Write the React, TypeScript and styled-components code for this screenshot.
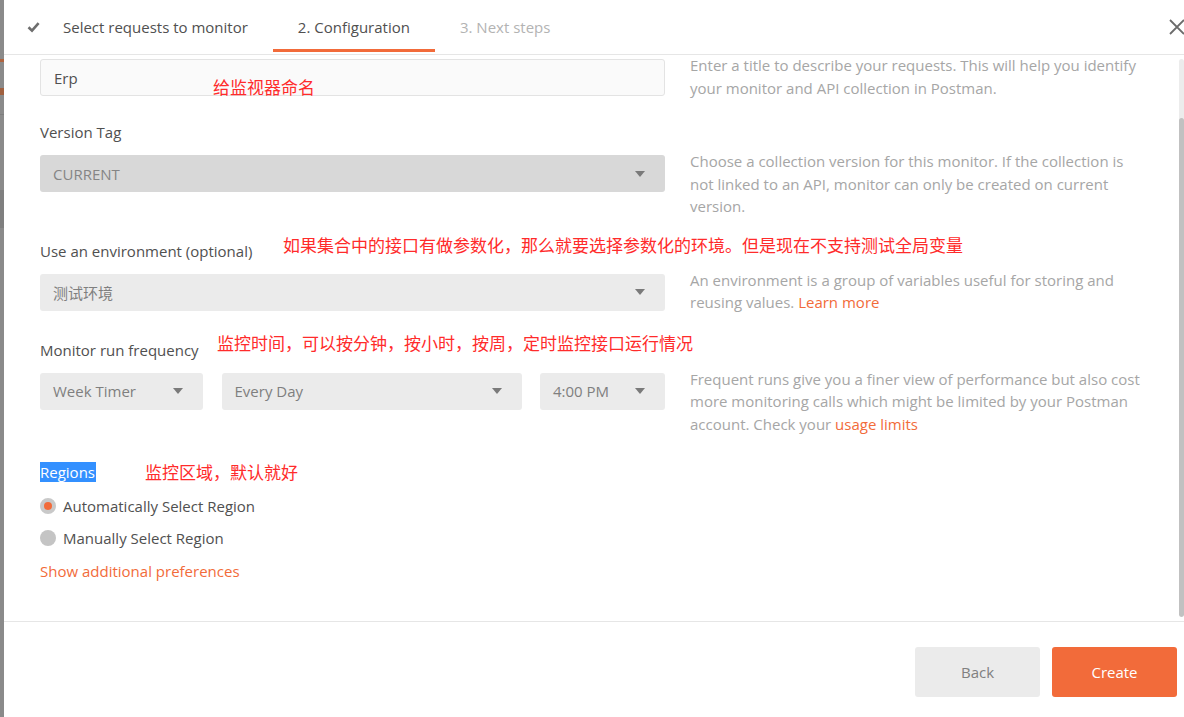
import React from 'react'
import styled, { createGlobalStyle } from 'styled-components'

const GlobalStyle = createGlobalStyle`
    html, body {
        margin: 0;
        padding: 0;
        background: #fff;
    }
    body {
        font-family: "Open Sans", "Noto Sans CJK SC", sans-serif;
        font-size: 15px;
        color: #505050;
    }
`

const ORANGE = '#f26b3a'

function CheckIcon() {
    return (
        <svg width="13" height="12" viewBox="0 0 13 12">
            <path d="M1.5 6.2 L5 9.6 L11.6 2.2" fill="none" stroke="#6e6e6e" strokeWidth="2.6" />
        </svg>
    )
}

function CloseIcon() {
    return (
        <svg width="16" height="16" viewBox="0 0 16 16">
            <path d="M1 1 L15 15 M15 1 L1 15" stroke="#6b6b6b" strokeWidth="1.8" />
        </svg>
    )
}

function App() {
    return (
        <Screen>
            <GlobalStyle />
            <Backdrop />
            <Modal>
                <Header>
                    <Tab state="done" first>
                        <CheckIcon />
                        <span>Select requests to monitor</span>
                    </Tab>
                    <Tab state="active">2. Configuration</Tab>
                    <Tab state="todo">3. Next steps</Tab>
                    <Close><CloseIcon /></Close>
                </Header>
                <Body>
                    <Content>
                        <Section after={23}>
                            <Control>
                                <TextInput>Erp</TextInput>
                            </Control>
                            <Help>
                                Enter a title to describe your requests. This will help you identify
                                your monitor and API collection in Postman.
                            </Help>
                            <Note left={173} top={18}>给监视器命名</Note>
                        </Section>

                        <Section after={23}>
                            <Label>Version Tag</Label>
                            <Control>
                                <Select disabled>
                                    <span>CURRENT</span>
                                    <Caret />
                                </Select>
                            </Control>
                            <Help>
                                Choose a collection version for this monitor. If the collection is
                                not linked to an API, monitor can only be created on current
                                version.
                            </Help>
                        </Section>

                        <Section after={26}>
                            <Label>Use an environment (optional)</Label>
                            <Control>
                                <Select>
                                    <span>测试环境</span>
                                    <Caret />
                                </Select>
                            </Control>
                            <Help>
                                An environment is a group of variables useful for storing and
                                reusing values. <Link>Learn more</Link>
                            </Help>
                            <Note left={243} top={-6}>如果集合中的接口有做参数化，那么就要选择参数化的环境。但是现在不支持测试全局变量</Note>
                        </Section>

                        <Section after={27}>
                            <Label>Monitor run frequency</Label>
                            <FrequencyRow>
                                <Select width={163}>
                                    <span>Week Timer</span>
                                    <Caret />
                                </Select>
                                <Select width={300}>
                                    <span>Every Day</span>
                                    <Caret />
                                </Select>
                                <Select width={125}>
                                    <span>4:00 PM</span>
                                    <Caret />
                                </Select>
                            </FrequencyRow>
                            <Help>
                                Frequent runs give you a finer view of performance but also cost
                                more monitoring calls which might be limited by your Postman
                                account. Check your <Link>usage limits</Link>
                            </Help>
                            <Note left={177} top={-7}>监控时间，可以按分钟，按小时，按周，定时监控接口运行情况</Note>
                        </Section>

                        <Regions>
                            <RegionsLabel><Selected>Regions</Selected></RegionsLabel>
                            <Radio>
                                <RadioDot checked />
                                <span>Automatically Select Region</span>
                            </Radio>
                            <Radio>
                                <RadioDot />
                                <span>Manually Select Region</span>
                            </Radio>
                            <MoreLink>Show additional preferences</MoreLink>
                            <Note left={105} top={0}>监控区域，默认就好</Note>
                        </Regions>
                    </Content>
                    <Scrollbar>
                        <ScrollGap />
                        <ScrollThumb />
                    </Scrollbar>
                </Body>
                <Footer>
                    <Button>Back</Button>
                    <Button primary>Create</Button>
                </Footer>
            </Modal>
        </Screen>
    )
}

const Screen = styled.div`
    width: 1184px;
    height: 717px;
    display: flex;
    overflow: hidden;
`

const Backdrop = styled.div`
    width: 4px;
    flex-shrink: 0;
    background: linear-gradient(
        to bottom,
        #8a8a8a 0, #8a8a8a 59px,
        #b0643f 59px, #b0643f 62px,
        #8a8a8a 62px, #8a8a8a 88px,
        #a0603f 88px, #a0603f 95px,
        #8a8a8a 95px, #8a8a8a 114px,
        #7e7e7e 114px, #7e7e7e 115px,
        #8a8a8a 115px, #8a8a8a 190px,
        #7f7f7f 190px, #7f7f7f 228px,
        #8a8a8a 228px
    );
`

const Modal = styled.div`
    flex: 1;
    display: flex;
    flex-direction: column;
    background: #fff;
    min-width: 0;
`

const Header = styled.div`
    height: 54px;
    flex-shrink: 0;
    display: flex;
    align-items: flex-start;
    border-bottom: 1px solid #e6e6e6;
`

const Tab = styled.div<{ state: 'done' | 'active' | 'todo'; first?: boolean }>`
    height: 52px;
    box-sizing: border-box;
    padding: 5px 25px 0 ${p => (p.first ? 23 : 25)}px;
    display: flex;
    align-items: center;
    gap: 23px;
    font-size: 15px;
    color: ${p => (p.state === 'todo' ? '#b3b3b3' : '#505050')};
    border-bottom: 3px solid ${p => (p.state === 'active' ? ORANGE : 'transparent')};
    white-space: nowrap;
`

const Close = styled.div`
    margin-left: auto;
    margin-top: 19px;
    margin-right: -1px;
    width: 16px;
    height: 16px;
    display: flex;
`

const Body = styled.div`
    flex: 1;
    display: flex;
    min-height: 0;
`

const Content = styled.div`
    flex: 1;
    padding: 4px 0 0 36px;
    overflow: hidden;
`

const Section = styled.div<{ after: number }>`
    position: relative;
    display: grid;
    grid-template-columns: 625px 456px;
    column-gap: 25px;
    margin-bottom: ${p => p.after}px;
`

const Label = styled.div`
    grid-column: 1;
    font-size: 15px;
    line-height: 20px;
    color: #505050;
    margin-bottom: 13px;
`

const Control = styled.div`
    grid-column: 1;
`

const Help = styled.div`
    grid-column: 2;
    margin-top: -5px;
    font-size: 15px;
    line-height: 22.5px;
    color: #a6a6a6;
`

const Link = styled.span`
    color: ${ORANGE};
`

const TextInput = styled.div`
    height: 37px;
    box-sizing: border-box;
    border: 1px solid #e3e3e3;
    border-radius: 3px;
    background: #fafafa;
    padding: 0 13px;
    display: flex;
    align-items: center;
    font-size: 15px;
    color: #505050;
`

const Select = styled.div<{ width?: number; disabled?: boolean }>`
    width: ${p => (p.width ? `${p.width}px` : 'auto')};
    height: 37px;
    box-sizing: border-box;
    border-radius: 3px;
    background: ${p => (p.disabled ? '#d8d8d8' : '#ebebeb')};
    padding: 0 20px 0 13px;
    display: flex;
    align-items: center;
    justify-content: space-between;
    font-size: 15px;
    color: ${p => (p.disabled ? '#858585' : '#7f7f7f')};
`

const Caret = styled.span`
    width: 0;
    height: 0;
    border-left: 5px solid transparent;
    border-right: 5px solid transparent;
    border-top: 6px solid #7a7a7a;
`

const FrequencyRow = styled.div`
    grid-column: 1;
    display: flex;
    justify-content: space-between;
`

const Note = styled.div<{ left: number; top: number }>`
    position: absolute;
    left: ${p => p.left}px;
    top: ${p => p.top}px;
    font-family: "Noto Sans CJK SC", sans-serif;
    font-size: 17px;
    line-height: 20px;
    color: #ff2b2b;
    white-space: nowrap;
`

const Regions = styled.div`
    position: relative;
    display: flex;
    flex-direction: column;
    align-items: flex-start;
`

const RegionsLabel = styled.div`
    font-size: 15px;
    line-height: 20px;
    margin-bottom: 14px;
`

const Selected = styled.span`
    background: #3390ff;
    color: #fff;
    padding-right: 1px;
`

const Radio = styled.div`
    display: flex;
    align-items: center;
    gap: 7px;
    height: 20px;
    margin-bottom: 12px;
    font-size: 15px;
    color: #505050;
`

const RadioDot = styled.span<{ checked?: boolean }>`
    width: 16px;
    height: 16px;
    border-radius: 50%;
    box-sizing: border-box;
    background: ${p => (p.checked ? ORANGE : '#c4c4c4')};
    border: ${p => (p.checked ? '4px solid #c9c9c9' : 'none')};
`

const MoreLink = styled.div`
    margin-top: 1px;
    font-size: 15px;
    line-height: 20px;
    color: ${ORANGE};
`

const Scrollbar = styled.div`
    width: 5px;
    margin: 4px 0;
    display: flex;
    flex-direction: column;
    background: #ececec;
    border-radius: 3px;
    overflow: hidden;
`

const ScrollGap = styled.div`
    height: 59px;
`

const ScrollThumb = styled.div`
    flex: 1;
    background: #c1c1c1;
    border-radius: 3px;
`

const Footer = styled.div`
    height: 96px;
    flex-shrink: 0;
    box-sizing: border-box;
    border-top: 1px solid #e6e6e6;
    padding: 25px 7px 0 0;
    display: flex;
    justify-content: flex-end;
    align-items: flex-start;
    gap: 12px;
`

const Button = styled.div<{ primary?: boolean }>`
    width: 125px;
    height: 50px;
    border-radius: 3px;
    display: flex;
    align-items: center;
    justify-content: center;
    font-size: 15px;
    background: ${p => (p.primary ? ORANGE : '#ebebeb')};
    color: ${p => (p.primary ? '#fff' : '#808080')};
`

export default App
